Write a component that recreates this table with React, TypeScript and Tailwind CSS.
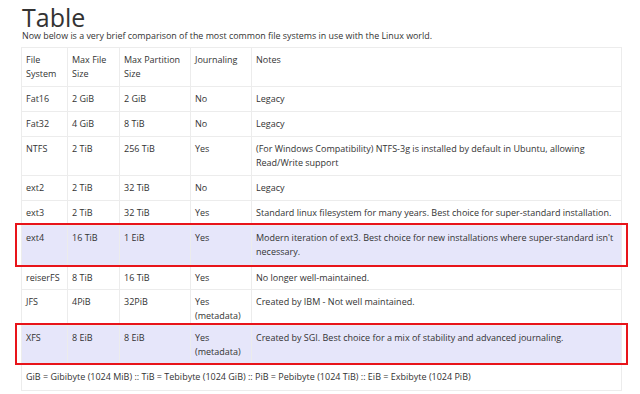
import React from 'react';

interface Row {
  fs: string;
  file: string;
  part: string;
  journal: string;
  notes: string;
  marked?: boolean;
  pad?: string;
}

const rows: Row[] = [
  { fs: "Fat16", file: "2 GiB", part: "2 GiB", journal: "No", notes: "Legacy" },
  { fs: "Fat32", file: "4 GiB", part: "8 TiB", journal: "No", notes: "Legacy" },
  {
    fs: "NTFS",
    file: "2 TiB",
    part: "256 TiB",
    journal: "Yes",
    notes: "(For Windows Compatibility) NTFS-3g is installed by default in Ubuntu, allowing Read/Write support",
  },
  { fs: "ext2", file: "2 TiB", part: "32 TiB", journal: "No", notes: "Legacy" },
  {
    fs: "ext3",
    file: "2 TiB",
    part: "32 TiB",
    journal: "Yes",
    notes: "Standard linux filesystem for many years. Best choice for super-standard installation.",
  },
  {
    fs: "ext4",
    file: "16 TiB",
    part: "1 EiB",
    journal: "Yes",
    notes: "Modern iteration of ext3. Best choice for new installations where super-standard isn't necessary.",
    marked: true,
    pad: "pt-[5px] pb-[7px]",
  },
  { fs: "reiserFS", file: "8 TiB", part: "16 TiB", journal: "Yes", notes: "No longer well-maintained.", pad: "pt-[4px] pb-[4px]" },
  { fs: "JFS", file: "4PiB", part: "32PiB", journal: "Yes (metadata)", notes: "Created by IBM - Not well maintained.", pad: "pt-[5px] pb-[2px]" },
  {
    fs: "XFS",
    file: "8 EiB",
    part: "8 EiB",
    journal: "Yes (metadata)",
    notes: "Created by SGI. Best choice for a mix of stability and advanced journaling.",
    marked: true,
  },
];

const cell = "border border-[#ececec] px-[4px] align-top leading-[14px]";

export default function App() {
  return (
    <div className="w-[640px] h-[394px] overflow-hidden bg-white text-[#333] font-['Open_Sans',sans-serif]">
      <div className="pl-[21px] pr-[18px] pt-[3px]">
        <h1 className="text-[25px] leading-[28px] text-[#333] pl-[1px]">Table</h1>
        <p className="text-[8.9px] leading-[10px] pl-[1px]">
          Now below is a very brief comparison of the most common file systems in use with the Linux world.
        </p>
        <table className="mt-[6px] w-[601px] table-fixed border-collapse text-[9px]">
          <colgroup>
            <col className="w-[46px]" />
            <col className="w-[52px]" />
            <col className="w-[71px]" />
            <col className="w-[61px]" />
            <col />
          </colgroup>
          <thead>
            <tr>
              <td className={`${cell} py-[5px]`}>File System</td>
              <td className={`${cell} py-[5px]`}>Max File Size</td>
              <td className={`${cell} py-[5px]`}>Max Partition Size</td>
              <td className={`${cell} py-[5px]`}>Journaling</td>
              <td className={`${cell} py-[5px]`}>Notes</td>
            </tr>
          </thead>
          <tbody>
            {rows.map((r) => {
              const c = `${cell} ${r.pad ?? "py-[5px]"}`;
              return (
                <tr key={r.fs} className={r.marked ? "bg-[#e6e6fa]" : ""}>
                  <td className={`${c} ${r.marked ? "relative" : ""}`}>
                    {r.marked && (
                      <div className="absolute left-[-7px] top-[-3px] w-[613px] bottom-[-1px] border-2 border-[#e8141a] pointer-events-none" />
                    )}
                    {r.fs}
                  </td>
                  <td className={c}>{r.file}</td>
                  <td className={c}>{r.part}</td>
                  <td className={c}>{r.journal}</td>
                  <td className={c}>{r.notes}</td>
                </tr>
              );
            })}
            <tr>
              <td colSpan={5} className={`${cell} pt-[5px] pb-[6px]`}>
                GiB = Gibibyte (1024 MiB) :: TiB = Tebibyte (1024 GiB) :: PiB = Pebibyte (1024 TiB) :: EiB = Exbibyte (1024 PiB)
              </td>
            </tr>
          </tbody>
        </table>
      </div>
    </div>
  );
}
